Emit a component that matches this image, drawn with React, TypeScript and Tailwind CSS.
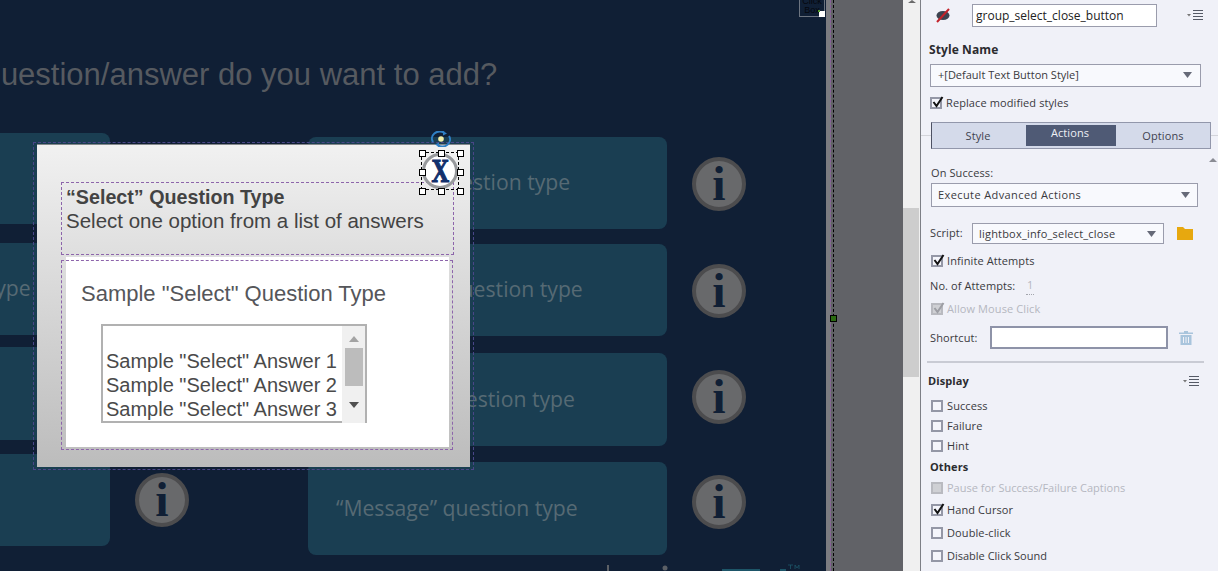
const panelFont = { fontFamily: '"Open Sans", sans-serif' };

const Info = ({ className = "" }: { className?: string }) => (
  <div className={`flex h-[54px] w-[54px] shrink-0 items-center justify-center rounded-full border-4 border-[#4c4c4e] bg-[#68696b] ${className}`}>
    <span className="font-['Liberation_Serif',serif] text-[48px] leading-none font-bold text-[#101f35]">i</span>
  </div>
);

const Row = ({ label, className, iconClass, textClass = "pb-[1px]" }: { label: string; className: string; iconClass?: string; textClass?: string }) => (
  <div className={`flex items-center gap-[25px] ${className}`}>
    <div className={`flex h-full w-[359px] items-center rounded-lg bg-[#1a3e52] pl-[28px] font-['Open_Sans',sans-serif] text-[21.200px] whitespace-nowrap text-[#566a74] ${textClass}`}>
      {label}
    </div>
    <Info className={iconClass} />
  </div>
);

const ListMenu = () => (
  <svg width="17" height="11" viewBox="0 0 17 11" className="shrink-0">
    <path d="M0 4h4L2 6.500z" fill="#777" />
    <path d="M6 .5h10M6 3.500h10M6 6.500h10M6 9.500h10" stroke="#555a66" strokeWidth="1" />
  </svg>
);

const Caret = () => (
  <svg width="10" height="7" viewBox="0 0 10 7" className="shrink-0">
    <path d="M0 0h9L4.500 6z" fill="#666a78" />
  </svg>
);

const Check = ({ checked, disabled }: { checked?: boolean; disabled?: boolean }) => (
  <span
    className={`relative block h-[12px] w-[12px] shrink-0 border-2 ${
      disabled ? "border-[#b9bac0] bg-[#cfd0d4]" : "border-[#9497a6] bg-[#f4f5fb]"
    }`}
  >
    {checked && (
      <svg width="14" height="14" viewBox="0 0 14 14" className="absolute -top-[4px] -left-[1px]">
        <path d="M2.500 7l3 4 6-9" fill="none" stroke={disabled ? "#9d9ea4" : "#111"} strokeWidth="2" />
      </svg>
    )}
  </span>
);

const CheckRow = ({
  label,
  checked,
  disabled,
  className,
}: {
  label: string;
  checked?: boolean;
  disabled?: boolean;
  className: string;
}) => (
  <div className={`flex h-[14px] items-center gap-[4px] pl-[10px] ${className} ${disabled ? "text-[#b5b7c0]" : "text-[#3a3a3e]"}`}>
    <Check checked={checked} disabled={disabled} />
    <span className="whitespace-nowrap">{label}</span>
  </div>
);

const handles = [
  "left-[-3px] top-[-3px]",
  "left-[16px] top-[-3px]",
  "left-[35px] top-[-3px]",
  "left-[-3px] top-[16px]",
  "left-[35px] top-[16px]",
  "left-[-3px] top-[35px]",
  "left-[16px] top-[35px]",
  "left-[35px] top-[35px]",
];

const Lightbox = () => (
  <div className="absolute top-[144px] left-[37px] h-[323px] w-[433px] border-t border-[#85878a] bg-gradient-to-b from-[#f1f1f1] to-[#bcbcbc] font-['Liberation_Sans',sans-serif]">
    <div className="pointer-events-none absolute -top-[3px] -right-[4px] -bottom-[3px] -left-[4px] border border-dashed border-[#4a4688]" />
    <div className="mt-[37px] ml-[24px] h-[73px] w-[393px] border border-dashed border-[#8d65ab] pt-[2px] pl-[4px] leading-[24px] text-[#434343]">
      <div className="text-[19.700px] font-bold">“Select” Question Type</div>
      <div className="text-[20.500px]">Select one option from a list of answers</div>
    </div>
    <div className="relative mt-[2px] ml-[29px] h-[190px] w-[383px] bg-white pt-[23px] pl-[15px]">
      <div className="pointer-events-none absolute top-[3px] -right-[4px] -bottom-[3px] -left-[5px] border border-dashed border-[#8d65ab]" />
      <div className="text-[22px] leading-[28px] text-[#55565a]">Sample "Select" Question Type</div>
      <div className="mt-[16px] ml-[20px] flex h-[99px] w-[266px] border-2 border-[#b1b1b1]">
        <div className="flex-1 overflow-hidden pt-[23px] pl-[3px] text-[20px] leading-[24px] whitespace-nowrap text-[#4a4a4a]">
          <div>Sample "Select" Answer 1</div>
          <div>Sample "Select" Answer 2</div>
          <div>Sample "Select" Answer 3</div>
        </div>
        <div className="-mb-[2px] flex w-[23px] flex-col items-center bg-[#f0f0f0] pt-[10px]">
          <span className="h-0 w-0 border-x-[5px] border-b-[6px] border-x-transparent border-b-[#a3a3a3]" />
          <span className="mt-[6px] h-[38px] w-[18px] bg-[#bcbcbc]" />
          <span className="mt-[16px] h-0 w-0 border-x-[5px] border-t-[6px] border-x-transparent border-t-[#505050]" />
        </div>
      </div>
    </div>

    {/* selected close button */}
    <div className="absolute top-[7px] left-[384px] h-[38px] w-[38px] border border-dashed border-black">
      <div className="absolute top-0 left-0 flex h-[36px] w-[36px] items-center justify-center overflow-hidden rounded-full border-[3px] border-[#97999c] bg-white">
        <span className="inline-block scale-x-[0.72] font-['Liberation_Serif',serif] text-[34px] leading-none font-bold text-[#12306c] [-webkit-text-stroke:1.2px_#12306c]">X</span>
      </div>
      {handles.map((h) => (
        <span key={h} className={`absolute h-[7px] w-[7px] border border-black bg-white ${h}`} />
      ))}
      <svg width="20" height="16" viewBox="0 0 20 16" className="absolute -top-[22px] left-[9px]">
        <path d="M2 11A8 7 0 0 1 13 1.500M18 5A8 7 0 0 1 7 14.500" fill="none" stroke="#2f7fc4" strokeWidth="2" />
        <path d="M12 0l4 2.500-4 2zM8 16l-4-2.500 4-2z" fill="#2f7fc4" />
        <circle cx="10" cy="8" r="2.800" fill="#f3efa8" />
      </svg>
    </div>
  </div>
);

const Stage = () => (
  <div className="relative h-full w-[826px] shrink-0 overflow-hidden bg-[#101f35]">
    <h1 className="mt-[56px] -ml-[199px] font-['Liberation_Sans',sans-serif] text-[31px] leading-[38px] font-normal whitespace-nowrap text-[#565a60]">
      What type of question/answer do you want to add?
    </h1>

    <div className="mt-[39px] -ml-[249px] flex gap-[119px]">
      <div className="flex flex-col">
        <Row label="" className="h-[91px]" />
        <Row label="“Checkbox” question type" className="mt-[19px] h-[92px]" textClass="pb-[3px]" />
        <Row label="" className="mt-[12px] h-[93px]" />
        <Row label="" className="mt-[14px] h-[92px]" />
      </div>
      <div className="flex flex-col pt-[4px]">
        <Row label="“Ranking” question type" className="h-[92px]" iconClass="mt-[2px]" textClass="pb-[3px]" />
        <Row label="“Matching” question type" className="mt-[15px] h-[92px]" iconClass="mt-[2px]" textClass="pb-[3px]" />
        <Row label="“Ordered” question type" className="mt-[17px] h-[93px]" iconClass="-mt-[6px]" />
        <Row label="“Message” question type" className="mt-[16px] h-[93px]" iconClass="-mt-[14px]" />
      </div>
    </div>

    {/* bottom logo, cut off by the window */}
    <svg width="210" height="8" viewBox="0 0 210 8" className="absolute bottom-0 left-[600px]">
      <rect x="7" y="2" width="2" height="6" fill="#5c6066" />
      <circle cx="65" cy="5" r="2.500" fill="#5c6066" />
      <rect x="122" y="6" width="38" height="2" fill="#1d5568" />
      <rect x="180" y="6" width="6" height="2" fill="#1d5568" />
      <path d="M188 2h5M190.500 2v4M195 6V2l2 3 2-3v4" fill="none" stroke="#1d5568" strokeWidth="0.800" />
    </svg>

    <Lightbox />

    {/* click box at top right */}
    <div className="absolute -top-[6px] left-[799px] flex h-[23px] w-[26px] items-center justify-center border border-[#6c7480] text-center font-['Liberation_Sans',sans-serif] text-[9px] leading-[9px] text-[#05070d]">
      Click Box
      <span className="absolute -right-[1px] -bottom-[1px] h-[6px] w-[6px] bg-white" />
      <span className="absolute right-[4px] bottom-[4px] h-[2px] w-[2px] bg-[#4f9a2c]" />
    </div>
  </div>
);

const Gutter = () => (
  <div className="relative h-full w-[77px] shrink-0 bg-[#616267]">
    <div className="absolute inset-y-0 left-0 w-[5px] bg-[#7b7c81]" />
    <div className="absolute inset-y-0 left-[4px] border-l border-dashed border-[#8a5f9c]" />
    <div className="absolute inset-y-0 left-[7px] border-l border-dashed border-black" />
    <div className="absolute top-[315px] left-[4px] h-[7px] w-[7px] border border-black bg-[#2b6a12]" />
  </div>
);

const Scroller = () => (
  <div className="relative h-full w-[17px] shrink-0 bg-[#f0f0f0]">
    <div className="absolute top-0 left-[5px] h-0 w-0 border-x-[4px] border-b-[3px] border-x-transparent border-b-[#6b6b6b]" />
    <div className="absolute top-[208px] left-0 h-[169px] w-[16px] bg-[#cdcdcd]" />
  </div>
);

const Panel = () => (
  <div className="relative h-full flex-1 border-l border-[#7d7f86] bg-[#f0f1f8] text-[11px] tracking-[0.1px] text-[#3a3a3e]" style={panelFont}>
    <div className="flex items-center pt-[4px]">
      <svg width="16" height="15" viewBox="0 0 16 15" className="ml-[14px] shrink-0">
        <ellipse cx="8" cy="7.500" rx="6.500" ry="4.500" fill="#3d4350" />
        <path d="M2 14L14 1" stroke="#c3232b" strokeWidth="2" />
      </svg>
      <div className="ml-[21px] flex h-[23px] w-[185px] items-center border border-[#9a9cac] bg-white pl-[3px] text-[12px] tracking-normal text-[#222]">
        group_select_close_button
      </div>
      <div className="ml-[30px]">
        <ListMenu />
      </div>
    </div>

    <div className="mt-[15px] pl-[8px] text-[12px] leading-[16px] font-bold text-[#2b2b2f]">Style Name</div>

    <div className="mt-[6px] ml-[9px] flex h-[23px] w-[271px] items-center justify-between border border-[#9a9cac] bg-[#f8f9fd] pr-[7px] pl-[7px]">
      <span className="tracking-[0px]">+[Default Text Button Style]</span>
      <Caret />
    </div>

    <CheckRow label="Replace modified styles" checked className="mt-[9px] -ml-[1px]" />

    <div className="mt-[12px] flex items-center">
      <div className="h-px w-[10px] bg-[#d3d4da]" />
      <div className="flex h-[27px] w-[280px] border border-[#9297ab] border-l-[#4d5163] bg-[#d4daea] text-[#3f4350]">
        <div className="flex w-[94px] items-center justify-center pt-[1px] pr-[2px]">Style</div>
        <div className="my-[2px] flex w-[90px] items-center justify-center bg-[#4f5a75] pr-[2px] pb-[5px] text-[#eef0f5]">Actions</div>
        <div className="flex flex-1 items-center justify-center pt-[1px]">Options</div>
      </div>
      <div className="h-px flex-1 bg-[#d3d4da]" />
    </div>

    <div className="relative mt-[16px] pl-[10px] leading-[16px]">
      On Success:
      <span className="absolute -top-[7px] right-[1px] h-0 w-0 border-x-[4px] border-b-[4px] border-x-transparent border-b-[#8a8c94]" />
    </div>

    <div className="mt-[2px] ml-[10px] flex h-[24px] w-[267px] items-center justify-between border border-[#9a9cac] bg-[#f8f9fd] px-[6px]">
      <span className="tracking-[0.4px]">Execute Advanced Actions</span>
      <Caret />
    </div>

    <div className="mt-[16px] flex items-center pl-[9px]">
      <span className="w-[42px]">Script:</span>
      <div className="flex h-[21px] w-[192px] items-center justify-between border border-[#9a9cac] bg-[#f8f9fd] px-[6px] pt-[1px]">
        <span className="tracking-[0.2px]">lightbox_info_select_close</span>
        <Caret />
      </div>
      <svg width="16" height="13" viewBox="0 0 16 13" className="ml-[13px]">
        <path d="M0 0h6l2 2h8v11H0z" fill="#e7a80f" />
      </svg>
    </div>

    <CheckRow label="Infinite Attempts" checked className="mt-[10px]" />

    <div className="mt-[10px] flex h-[16px] items-center pl-[9px]">
      <span className="w-[96px]">No. of Attempts:</span>
      <span className="border-b border-dotted border-[#a3a5ad] px-px text-[#b5b7c0]">1</span>
    </div>

    <CheckRow label="Allow Mouse Click" checked disabled className="mt-[8px]" />

    <div className="mt-[10px] flex items-center pl-[9px]">
      <span className="w-[60px] pt-[2px]">Shortcut:</span>
      <div className="h-[23px] w-[178px] border-2 border-[#8e93a8] bg-white" />
      <svg width="14" height="15" viewBox="0 0 14 15" className="ml-[11px]">
        <path d="M5 1h4v1.500h5v1.500H0V2.500h5zM1.500 5h11v10h-11z" fill="#a8c4dc" />
        <path d="M4.500 7v6M7 7v6M9.500 7v6" stroke="#f0f1f8" strokeWidth="1" />
      </svg>
    </div>

    <div className="mt-[12px] ml-[6px] h-[2px] w-[277px] bg-[#c9cbd4]" />

    <div className="mt-[10px] flex items-center justify-between pr-[18px] pl-[7px] leading-[16px] font-bold text-[#2b2b2f]">
      <span>Display</span>
      <ListMenu />
    </div>

    <CheckRow label="Success" className="mt-[10px]" />
    <CheckRow label="Failure" className="mt-[6px]" />
    <CheckRow label="Hint" className="mt-[6px]" />
    <div className="mt-[6px] pl-[9px] leading-[16px] font-bold text-[#2b2b2f]">Others</div>
    <CheckRow label="Pause for Success/Failure Captions" disabled className="mt-[6px] tracking-[0px]" />
    <CheckRow label="Hand Cursor" checked className="mt-[8px]" />
    <CheckRow label="Double-click" className="mt-[9px]" />
    <CheckRow label="Disable Click Sound" className="mt-[9px] tracking-[0px]" />
  </div>
);

export default function App() {
  return (
    <div className="flex h-[571px] w-[1218px] overflow-hidden">
      <Stage />
      <Gutter />
      <Scroller />
      <Panel />
    </div>
  );
}
